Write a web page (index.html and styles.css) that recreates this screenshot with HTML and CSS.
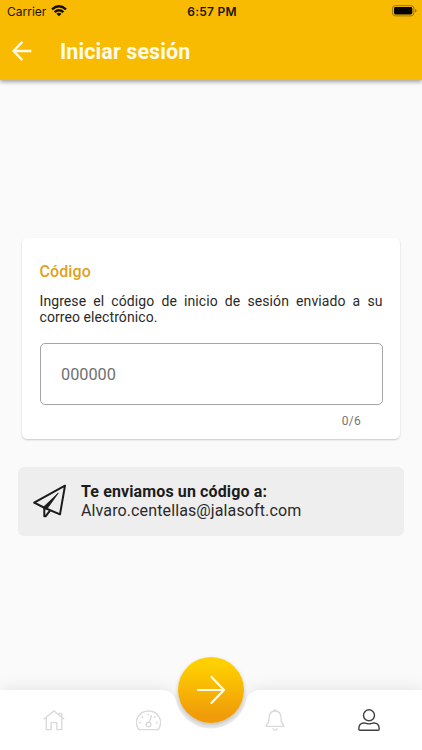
FILE: index.html
```html
<!DOCTYPE html>
<html lang="es">
<head>
<meta charset="utf-8">
<meta name="viewport" content="width=device-width, initial-scale=1">
<title>Iniciar sesión</title>
<link rel="stylesheet" href="styles.css">
</head>
<body>
<div class="screen">
  <header class="header">
    <div class="status">
      <div class="status-left">
        <span>Carrier</span>
        <svg class="wifi" width="16" height="12" viewBox="0 0 16 12" fill="none" stroke="#111" stroke-width="2.4"><path d="M1 4.3Q8-1.6 15 4.3M3.6 7.2Q8 3.5 12.4 7.2"/><path d="M8 11.3 5.4 8.8Q8 6.8 10.6 8.8Z" fill="#111" stroke="none"/></svg>
      </div>
      <span class="time">6:57 PM</span>
      <div class="status-right">
        <svg width="26" height="12" viewBox="0 0 26 12"><rect x="1.5" y=".6" width="21.3" height="10.3" rx="2.8" fill="none" stroke="#9b7508"/><rect x="3" y="2" width="18.300" height="7.500" rx="1.400" fill="#050400"/><path d="M24.200 4v3.600q1.300-.5 1.300-1.800T24.200 4Z" fill="#806009"/></svg>
      </div>
    </div>
    <div class="appbar">
      <svg class="back" width="20" height="20" viewBox="0 0 20 20" fill="none" stroke="#fffbe9" stroke-width="2.3"><path d="M19.3 10H2M10.4 .9 1.5 10l8.9 9.1"/></svg>
      <h1>Iniciar sesión</h1>
    </div>
  </header>

  <main class="content">
    <section class="card">
      <h2>Código</h2>
      <p class="hint">Ingrese el código de inicio de sesión enviado a su correo electrónico.</p>
      <div class="field">000000</div>
      <div class="counter">0/6</div>
    </section>
    <section class="notice">
      <svg class="plane" width="34" height="34" viewBox="0 0 34 34" fill="none" stroke="#1b1b1b" stroke-width="2" stroke-linejoin="round"><path d="M32 1.700 1.200 18.700l9.600 4.800 16.200 6.800Z"/><path d="M11.300 24v8.300h1.300l4.400-5.600"/><path d="M25.300 9 10.800 22.800l1 2.500 2.400-.7Z" fill="#1b1b1b" stroke-width=".8"/></svg>
      <div class="notice-text">
        <strong>Te enviamos un código a:</strong>
        <span>Alvaro.centellas@jalasoft.com</span>
      </div>
    </section>
  </main>

  <nav class="nav">
    <svg class="nav-shape" width="422" height="80" viewBox="0 0 422 80"><path d="M0 20H161C170 20 174 24 176 31A36 36 0 0 0 246 31C248 24 252 20 261 20H422V80H0Z" fill="#fff"/></svg>
    <div class="tab">
      <svg width="22" height="21" viewBox="0 0 22 21" fill="none" stroke="#dadada" stroke-width="1.4" stroke-linejoin="round"><path d="M.8 9.300 11 .9 21.200 9.300M3.300 8v11.600h4.800v-7h5.800v7h4.800V8M16 4.500V3.400h2.700v3.300"/></svg>
    </div>
    <div class="tab">
      <svg width="25" height="21" viewBox="0 0 25 21" fill="none" stroke="#dadada" stroke-width="1.4"><path d="M2.800 19.600C-3.200 10.800 3.200 1 12.500 1s15.700 9.800 9.700 18.600Z"/><circle cx="12.500" cy="14.500" r="2.300"/><path d="m13.300 12.300 2.200-7.100"/><g fill="#d4d4d4" stroke="none"><circle cx="4.200" cy="12.700" r=".9"/><circle cx="6.400" cy="7.200" r=".9"/><circle cx="12.200" cy="4.600" r=".9"/><circle cx="18.600" cy="7.200" r=".9"/><circle cx="20.800" cy="12.700" r=".9"/></g></svg>
    </div>
    <button class="fab" aria-label="Continuar">
      <svg width="30" height="30" viewBox="0 0 30 30" fill="none" stroke="#fffbe5" stroke-width="2.200" stroke-linecap="round" stroke-linejoin="miter"><path d="M2 15H27M15.500 2 28 15 15.500 28"/></svg>
    </button>
    <div class="tab">
      <svg width="20" height="22" viewBox="0 0 20 22" fill="none" stroke="#dadada" stroke-width="1.300" stroke-linecap="round" stroke-linejoin="round"><path d="M8.600 2.100Q8.700.8 10 .8t1.400 1.300M10 2C4.900 2 4 5.600 4 9.500c0 3.800-.9 5.300-2.700 6.700-.5.400-.4 1.200.5 1.200h16.400c.9 0 1-.8.5-1.200C16.900 14.800 16 13.300 16 9.500 16 5.600 15.100 2 10 2ZM7.900 19.600q.5 1.500 2.100 1.500t2.100-1.500"/></svg>
    </div>
    <div class="tab tab-active">
      <svg width="22" height="22" viewBox="0 0 22 22" fill="none" stroke="#414141" stroke-width="1.400" stroke-linejoin="round"><circle cx="11" cy="6.300" r="5.500"/><path d="M1.900 21.200Q.8 21.200.8 20C.8 15.400 2.700 14 6 14c2 0 2.500.9 5 .9s3-.9 5-.9c3.300 0 5.200 1.400 5.200 6q0 1.200-1.100 1.200Z"/></svg>
    </div>
  </nav>
</div>
</body>
</html>
```
FILE: styles.css
```css
* { box-sizing: border-box; }

body {
  margin: 0;
  font-family: Roboto, "Liberation Sans", sans-serif;
  color: #2a2a2a;
}

.screen {
  display: flex;
  flex-direction: column;
  width: 422px;
  height: 750px;
  overflow: hidden;
  background: #fafafa;
}

.header {
  height: 80px;
  background: #f9ba02;
  box-shadow: 0 2px 4px rgba(0, 0, 0, .35);
}

.status {
  display: grid;
  grid-template-columns: 1fr auto 1fr;
  align-items: center;
  height: 22px;
  padding: 0 5px 0 7px;
  font-family: Inter, sans-serif;
  font-size: 12px;
  color: #1c1600;
}

.status-left {
  display: flex;
  align-items: center;
  gap: 5px;
}

.status-right {
  display: flex;
  justify-content: flex-end;
}

.status svg { display: block; }

.time {
  font-weight: 600;
  letter-spacing: .25px;
}

.appbar {
  display: flex;
  align-items: center;
  gap: 28px;
  height: 58px;
  padding: 0 12px;
}

h1 {
  margin: 0;
  font-size: 21.5px;
  font-weight: 700;
  letter-spacing: .08px;
  color: #fffbe9;
}

.content {
  display: flex;
  flex: 1;
  flex-direction: column;
  padding: 158px 18px 0;
}

.card {
  height: 201px;
  margin: 0 4px;
  padding: 24px 17.5px 0;
  border-radius: 5px;
  background: #fff;
  box-shadow: 0 1px 2px rgba(0, 0, 0, .2);
}

h2 {
  margin: 0;
  font-size: 16px;
  font-weight: 500;
  line-height: 19px;
  letter-spacing: .1px;
  color: #e0a21b;
}

.hint {
  margin: 12px 0 0;
  font-size: 14px;
  line-height: 16px;
  letter-spacing: .08px;
  text-align: justify;
}

.field {
  display: flex;
  align-items: center;
  height: 62px;
  margin-top: 18px;
  padding: 0 20.5px;
  border: 1px solid #a5a5a5;
  border-radius: 5px;
  font-size: 16.3px;
  color: #707070;
}

.counter {
  margin: 8px 21.5px 0;
  font-size: 12px;
  line-height: 16px;
  letter-spacing: .3px;
  text-align: right;
  color: #757575;
}

.notice {
  display: flex;
  align-items: center;
  gap: 14px;
  height: 69px;
  margin-top: 27.5px;
  padding: 0 15px;
  border-radius: 6px;
  background: #eee;
}

.notice-text {
  display: flex;
  flex-direction: column;
  font-size: 16px;
  line-height: 19px;
  letter-spacing: .12px;
}

.notice-text strong { color: #1c1c1c; }

.nav {
  position: relative;
  display: grid;
  grid-template-columns: 108px 80px 46px 82px 106px;
  height: 60px;
}

.nav-shape {
  position: absolute;
  left: 0;
  bottom: 0;
  filter: drop-shadow(0 0 8px rgba(0, 0, 0, .1));
}

.tab {
  position: relative;
  display: flex;
  align-items: center;
  justify-content: center;
}

.fab {
  position: absolute;
  top: -33px;
  left: 178px;
  display: flex;
  align-items: center;
  justify-content: center;
  width: 66px;
  height: 66px;
  padding: 0;
  border: 0;
  border-radius: 50%;
  background: linear-gradient(#ffd000 10%, #f09b09 90%);
  box-shadow: 0 2px 4px rgba(0, 0, 0, .22);
}

.nav .tab:nth-of-type(1) { grid-column: 1; }
.nav .tab:nth-of-type(2) { grid-column: 2; }
.nav .tab:nth-of-type(3) { grid-column: 4; }
.nav .tab:nth-of-type(4) { grid-column: 5; }
```
